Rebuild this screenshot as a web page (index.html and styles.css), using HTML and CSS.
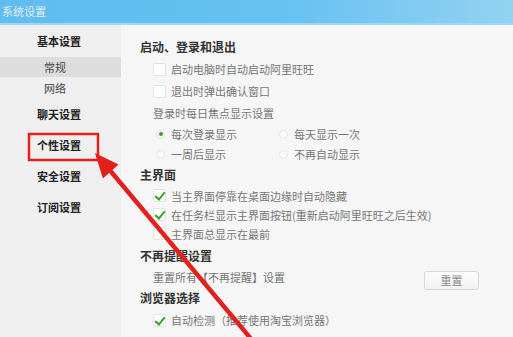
FILE: index.html
```html
<!DOCTYPE html>
<html lang="zh-CN">

<head>
  <meta charset="UTF-8" />
  <meta name="viewport" content="width=device-width, initial-scale=1.0" />
  <title>系统设置</title>
  <link rel="stylesheet" href="styles.css">
</head>

<body>
  <div class="win">
    <div class="title-bar">系统设置</div>
    <div class="main">
      <!-- 左侧菜单 -->
      <ul class="side">
        <li class="group">基本设置</li>
        <li class="sub active">常规</li>
        <li class="sub net">网络</li>
        <li class="group big">聊天设置</li>
        <li class="group big">个性设置</li>
        <li class="group big">安全设置</li>
        <li class="group big">订阅设置</li>
      </ul>
      <!-- 右侧内容 -->
      <div class="content">
        <h4 class="sec">启动、登录和退出</h4>
        <div class="row"><span class="cb"></span>启动电脑时自动启动阿里旺旺</div>
        <div class="row"><span class="cb"></span>退出时弹出确认窗口</div>
        <div class="row label">登录时每日焦点显示设置</div>
        <div class="radios">
          <div class="radio"><span class="dot on"></span>每次登录显示</div>
          <div class="radio"><span class="dot"></span>每天显示一次</div>
          <div class="radio"><span class="dot"></span>一周后显示</div>
          <div class="radio"><span class="dot"></span>不再自动显示</div>
        </div>
        <h4 class="sec">主界面</h4>
        <div class="row tight"><span class="cb checked"></span>当主界面停靠在桌面边缘时自动隐藏</div>
        <div class="row tight"><span class="cb checked"></span>在任务栏显示主界面按钮(重新启动阿里旺旺之后生效)</div>
        <div class="row tight"><span class="cb"></span>主界面总显示在最前</div>
        <h4 class="sec gap">不再提醒设置</h4>
        <div class="row label reset">重置所有【不再提醒】设置<button class="btn">重置</button></div>
        <h4 class="sec">浏览器选择</h4>
        <div class="row"><span class="cb checked"></span>自动检测（推荐使用淘宝浏览器）</div>
      </div>
    </div>

    <!-- 标注：红框和箭头 -->
    <svg class="mark" width="513" height="337" viewBox="0 0 513 337">
      <rect x="29" y="134" width="69" height="26" fill="none" stroke="#e3201b" stroke-width="2.5" />
      <line x1="110.5" y1="171" x2="252" y2="340" stroke="#e3201b" stroke-width="4.5" />
      <polygon points="95,153 102.9,178.5 118.5,164.5" fill="#e3201b" />
    </svg>
  </div>
</body>

</html>
```

FILE: styles.css
```css
* {
  margin: 0;
  padding: 0;
  box-sizing: border-box;
}

body {
  font-family: "Noto Sans CJK SC", "Noto Sans", sans-serif;
  font-size: 11px;
  background: #f6f6f6;
}

.win {
  position: relative;
  width: 513px;
  height: 337px;
  overflow: hidden;
}

.title-bar {
  height: 25px;
  line-height: 22px;
  padding-left: 2px;
  font-size: 11px;
  color: #e4ecf1;
  background: linear-gradient(to right, #60bdf0 0%, #66c1f1 55%, #93d2f2 100%);
  border-bottom: 2px solid #9fd8f4;
}

.main {
  display: flex;
  height: 312px;
}

.side {
  list-style: none;
  width: 121px;
  background: #efefef;
  padding-top: 5px;
}

.side li {
  padding-left: 37px;
  color: #222;
}

.side .group {
  height: 22px;
  line-height: 22px;
  font-weight: bold;
  margin-bottom: 5px;
}

.side .group.big {
  height: 31px;
  line-height: 31px;
  margin-bottom: 0;
}

.side .sub {
  height: 20px;
  line-height: 20px;
  padding-left: 44px;
  color: #444;
}

.side .sub.active {
  background: #dddddd;
}

.side .sub.net {
  margin: 1px 0 1px;
}

.content {
  flex: 1;
  padding: 11px 34px 0 19px;
  color: #777;
}

.sec {
  height: 22px;
  line-height: 22px;
  font-size: 12px;
  font-weight: bold;
  color: #333;
}

.sec.gap {
  margin-top: 2px;
}

.row {
  display: flex;
  align-items: center;
  height: 22px;
  padding-left: 13px;
}

.row.tight {
  height: 19px;
}

.row.label {
  padding-left: 13px;
}

.row.reset {
  height: 20px;
}

.cb {
  position: relative;
  width: 13px;
  height: 13px;
  margin-right: 5px;
  background: #fff;
  border: 1px solid #e2e2e2;
  border-radius: 2px;
}

.cb.checked::after {
  content: "";
  position: absolute;
  left: 3px;
  top: 0px;
  width: 4px;
  height: 8px;
  border-right: 2.5px solid #3aa12c;
  border-bottom: 2.5px solid #3aa12c;
  transform: rotate(40deg);
}

.radios {
  display: grid;
  grid-template-columns: 123px 1fr;
  padding-left: 16px;
}

.radio {
  display: flex;
  align-items: center;
  height: 20px;
}

.dot {
  position: relative;
  width: 9px;
  height: 9px;
  margin-right: 6px;
  border-radius: 50%;
  background: #fafafa;
  border: 1px solid #e6e6e6;
}

.dot.on::after {
  content: "";
  position: absolute;
  left: 1.5px;
  top: 1.5px;
  width: 4px;
  height: 4px;
  border-radius: 50%;
  background: #3aa12c;
}

.btn {
  margin-left: auto;
  margin-top: 6px;
  width: 55px;
  height: 19px;
  font-family: inherit;
  font-size: 11px;
  color: #888;
  background: linear-gradient(#fdfdfd, #f1f1f1);
  border: 1px solid #d6d6d6;
  border-radius: 3px;
}

.mark {
  position: absolute;
  left: 0;
  top: 0;
  pointer-events: none;
}
```
